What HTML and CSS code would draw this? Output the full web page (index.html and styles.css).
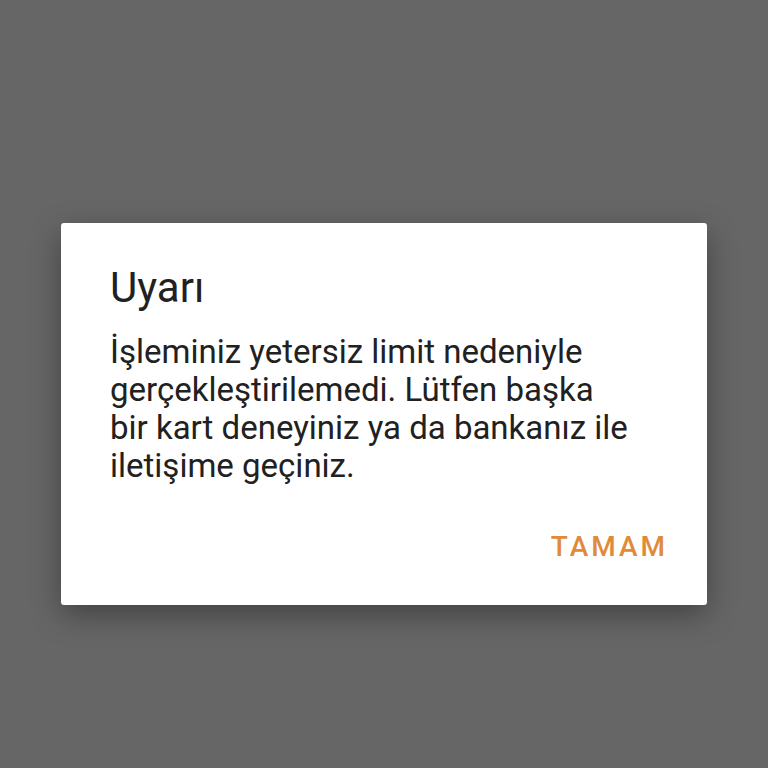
FILE: index.html
```html
<!DOCTYPE html>
<html lang="tr">
<head>
<meta charset="utf-8">
<link rel="stylesheet" href="styles.css">
</head>
<body>
<div class="screen">
  <div class="dialog">
    <div class="title">Uyarı</div>
    <div class="message">İşleminiz yetersiz limit nedeniyle gerçekleştirilemedi. Lütfen başka bir kart deneyiniz ya da bankanız ile iletişime geçiniz.</div>
    <div class="actions"><span class="btn">TAMAM</span></div>
  </div>
</div>
</body>
</html>
```
FILE: styles.css
```css
html, body {
  margin: 0;
  padding: 0;
  background: #666666;
}
.screen {
  width: 768px;
  height: 768px;
  display: flex;
  flex-direction: column;
  align-items: flex-start;
  padding: 223px 0 0 61px;
  box-sizing: border-box;
  font-family: Roboto, "Noto Sans", sans-serif;
}
.dialog {
  width: 646px;
  height: 382px;
  box-sizing: border-box;
  background: #ffffff;
  border-radius: 3px;
  box-shadow: 0 10px 30px rgba(0,0,0,0.35);
  padding: 40px 49px 0 49px;
  display: flex;
  flex-direction: column;
}
.title {
  font-size: 42px;
  line-height: 50px;
  color: #212121;
}
.message {
  margin-top: 20px;
  font-size: 33px;
  line-height: 38px;
  color: #212121;
  max-width: 523px;
}
.actions {
  margin-top: 46px;
  display: flex;
  justify-content: flex-end;
}
.btn {
  font-size: 28px;
  line-height: 32px;
  font-weight: 500;
  letter-spacing: 3px;
  color: #e08a3a;
  margin-right: -10px;
}
```
